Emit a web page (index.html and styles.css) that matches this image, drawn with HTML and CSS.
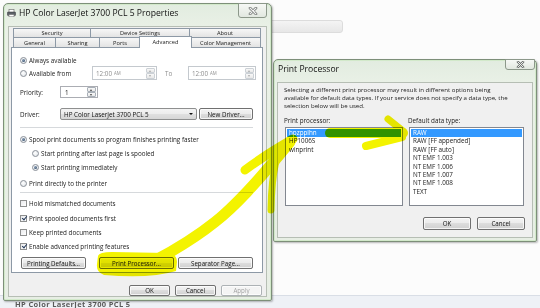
FILE: index.html
```html
<!DOCTYPE html>
<html lang="en">
<head>
<meta charset="utf-8">
<title>Print Processor</title>
<link rel="stylesheet" href="styles.css">
</head>
<body>
<div class="desktop">
  <div class="behind-field"></div>
  <div class="taskband"><span class="behind-caption">HP Color LaserJet 3700 PCL 5</span></div>

  <section class="window props">
    <header class="titlebar">
      <svg class="app-icon" viewBox="0 0 9 8" width="9" height="8">
        <rect x="2" y="0.5" width="5" height="3" fill="#fff" stroke="#777" stroke-width="0.7"/>
        <rect x="0.4" y="3" width="8.2" height="3.6" rx="0.8" fill="#5c6168" stroke="#333" stroke-width="0.5"/>
        <rect x="2" y="5.6" width="5" height="2.2" fill="#fff" stroke="#777" stroke-width="0.6"/>
      </svg>
      <span class="title">HP Color LaserJet 3700 PCL 5 Properties</span>
      <span class="close close-main">
        <svg viewBox="0 0 10 8" width="10" height="8"><path d="M2 1 L8 7 M8 1 L2 7" stroke="#6f7370" stroke-width="2.6" stroke-linecap="round"/><path d="M2 1 L8 7 M8 1 L2 7" stroke="#f3f3f3" stroke-width="1.1" stroke-linecap="round"/></svg>
      </span>
    </header>
    <div class="client">
      <div class="tabstrip">
        <div class="tabrow row-back">
          <span class="tab">Security</span>
          <span class="tab">Device Settings</span>
          <span class="tab">About</span>
        </div>
        <div class="tabrow row-front">
          <span class="tab">General</span>
          <span class="tab">Sharing</span>
          <span class="tab">Ports</span>
          <span class="tab active">Advanced</span>
          <span class="tab">Color Management</span>
        </div>
      </div>

      <div class="panel">
        <div class="row r-always"><span class="radio on"></span>Always available</div>
        <div class="row r-from">
          <span class="lbl-from"><span class="radio"></span>Available from</span>
          <span class="timebox t1">12:00 <small>AM</small><span class="spin"><i class="up"></i><i class="down"></i></span></span>
          <span class="to">To</span>
          <span class="timebox t2">12:00 <small>AM</small><span class="spin"><i class="up"></i><i class="down"></i></span></span>
        </div>
        <div class="row r-priority">
          <span class="lbl">Priority:</span>
          <span class="numbox">1<span class="spin dark"><i class="up"></i><i class="down"></i></span></span>
        </div>
        <div class="row r-driver">
          <span class="lbl">Driver:</span>
          <span class="combo">HP Color LaserJet 3700 PCL 5<i class="caret"></i></span>
          <span class="btn b-newdrv">New Driver...</span>
        </div>
        <div class="sep s1"></div>
        <div class="row r-spool"><span class="radio on"></span>Spool print documents so program finishes printing faster</div>
        <div class="row r-sub"><span class="radio"></span>Start printing after last page is spooled</div>
        <div class="row r-sub"><span class="radio on"></span>Start printing immediately</div>
        <div class="row r-direct"><span class="radio"></span>Print directly to the printer</div>
        <div class="sep s2"></div>
        <div class="row r-hold"><span class="check"></span>Hold mismatched documents</div>
        <div class="row r-first"><span class="check on"></span>Print spooled documents first</div>
        <div class="row"><span class="check"></span>Keep printed documents</div>
        <div class="row"><span class="check on"></span>Enable advanced printing features</div>
        <div class="row btnrow">
          <span class="btn b-defaults">Printing Defaults...</span>
          <span class="btn b-proc">Print Processor...</span>
          <span class="btn b-sep">Separator Page...</span>
        </div>
      </div>

      <div class="footer">
        <span class="btn fbtn">OK</span>
        <span class="btn fbtn">Cancel</span>
        <span class="btn fbtn disabled">Apply</span>
      </div>
    </div>
  </section>

  <section class="window pp">
    <header class="titlebar">
      <span class="title">Print Processor</span>
      <span class="close close-pp">
        <svg viewBox="0 0 10 8" width="9" height="7"><path d="M2 1 L8 7 M8 1 L2 7" stroke="#6f7370" stroke-width="2.6" stroke-linecap="round"/><path d="M2 1 L8 7 M8 1 L2 7" stroke="#f3f3f3" stroke-width="1.1" stroke-linecap="round"/></svg>
      </span>
    </header>
    <div class="client pp-client">
      <p class="intro">Selecting a different print processor may result in different options being<br>available for default data types. If your service does not specify a data type, the<br>selection below will be used.</p>
      <div class="pp-grid pp-labels">
        <span>Print processor:</span>
        <span>Default data type:</span>
      </div>
      <div class="pp-grid pp-lists">
        <ul class="listbox">
          <li class="sel">hpzppihn</li>
          <li>HP1006S</li>
          <li>winprint</li>
        </ul>
        <ul class="listbox">
          <li class="sel">RAW</li>
          <li>RAW [FF appended]</li>
          <li>RAW [FF auto]</li>
          <li>NT EMF 1.003</li>
          <li>NT EMF 1.006</li>
          <li>NT EMF 1.007</li>
          <li>NT EMF 1.008</li>
          <li>TEXT</li>
        </ul>
      </div>
      <div class="pp-footer">
        <span class="btn ppbtn">OK</span>
        <span class="btn ppbtn">Cancel</span>
      </div>
    </div>
  </section>

  <svg class="marker" viewBox="0 0 540 308" width="540" height="308">
    <path class="blob" d="M98 256 Q99 252 112 252 L168 253 Q177 254 177 262 L176 271 Q150 279 104 275 Q96 272 97 264 Z"/>
    <path class="stroke" stroke-width="11" d="M152 262 C175 250 195 238 215 222 S 255 185 290 142"/>
    <path class="stroke" stroke-width="9" d="M245 170 Q265 155 293 139"/>
    <path class="stroke" stroke-width="7" d="M288 142 Q272 150 271 210"/>
    <path class="stroke" stroke-width="10" d="M330 133 L403 133"/>
    <path class="stroke" stroke-width="7" d="M388 119 L403 131"/>
    <path class="stroke" stroke-width="8" d="M366 146 L402 137"/>
  </svg>
</div>
</body>
</html>
```

FILE: styles.css
```css
* { box-sizing: border-box; }
html, body { margin: 0; padding: 0; }
body {
  width: 540px; height: 308px; overflow: hidden;
  background: #fcfcfc;
  font-family: "Open Sans", "Noto Sans", "DejaVu Sans", sans-serif;
  font-size: 6.3px; color: #1b1b1b;
}
.desktop { position: relative; width: 540px; height: 308px; overflow: hidden; background: #fcfcfc; }

/* things behind the dialogs */
.behind-field {
  position: absolute; left: 266px; top: 20px; width: 77px; height: 13px;
  border: 1px solid #dcdcdc; border-radius: 3px;
  background: linear-gradient(#f4f4f4, #e7e7e7);
}
.taskband {
  position: absolute; left: 0; top: 295px; width: 540px; height: 13px;
  border-top: 1px solid #d9dee6; background: #eef1f6;
}
.behind-caption {
  position: absolute; left: 15px; top: 5px; font-size: 7.5px; line-height: 7px;
  font-weight: bold; color: #5a5a5a; filter: blur(0.4px); white-space: nowrap;
  letter-spacing: 0.35px;
}

/* windows */
.window {
  position: absolute; display: flex; flex-direction: column;
  border: 1px solid #7d8f79; border-radius: 5px 5px 2px 2px;
  background: linear-gradient(#e2ece0, #eaf1e7 26px, #e7eee4);
  box-shadow: inset 0 0 0 1px #d2e9ca, 1px 1px 2px rgba(0,0,0,.28);
}
.props { left: 3px; top: 3px; width: 269px; height: 298px; padding: 0 4px 3px 4px; }
.pp { left: 273px; top: 59px; width: 264px; height: 183px; padding: 0 3px 3px 3px; }

.titlebar { flex: none; height: 22px; display: flex; align-items: center; padding-bottom: 4px; }
.app-icon { margin-left: -1px; margin-right: 3px; flex: none; }
.title { font-size: 8.6px; color: #111; white-space: nowrap; }
.pp .title { padding-left: 1px; }
.close {
  position: absolute; display: flex; align-items: center; justify-content: center;
  border: 1px solid #8c988a; border-radius: 0 0 3px 3px;
  background: linear-gradient(#f6f8f5, #e2e8e0);
}
.close-main { left: 234px; top: -1px; width: 29px; height: 15px; }
.close-pp { left: 231px; top: -1px; width: 30px; height: 11px; }

.client { flex: 1; display: flex; flex-direction: column; background: #f0f0f0; border: 1px solid #b6beb4; }
.props .client { padding: 1px 0 0 2px; }

/* tabs */
.tabstrip { margin-left: 2px; display: flex; flex-direction: column; }
.tabrow { display: grid; }
.row-back { grid-template-columns: 77px 99px 72px; height: 9px; }
.row-front { grid-template-columns: 42px 44px 41px 50px 71px; height: 10px; }
.tab {
  display: flex; align-items: center; justify-content: center;
  border: 1px solid #8d99a6; border-bottom: none; border-right: none;
  background: linear-gradient(#f7f7f7, #e3e3e3);
  font-size: 5.7px; line-height: 6px; color: #222; white-space: nowrap;
}
.row-back .tab { padding-bottom: 1px; }
.tab:last-child { border-right: 1px solid #8d99a6; }
.tab.active {
  position: relative; z-index: 1; margin: -1px -2px -1px -1px; padding-bottom: 1px;
  background: #fff; border-right: 1px solid #8d99a6;
}

/* advanced panel */
.panel {
  flex: none; width: 252px; height: 226px; background: #fff;
  border: 1px solid #8d99a6; padding: 7px 9px 3px 8px;
  display: flex; flex-direction: column;
}
.row { display: flex; align-items: center; height: 10px; margin-top: 4px; white-space: nowrap; flex: none; }
.r-always { margin-top: 0; }
.r-from { height: 14px; margin-top: 1px; }
.r-priority { height: 12px; margin-top: 6px; }
.r-driver { height: 12px; margin-top: 10px; }
.sep { flex: none; height: 1px; background: #d6d9dc; }
.s1 { margin-top: 7px; }
.s2 { margin-top: 4px; }
.r-spool { margin-top: 6px; }
.r-sub { padding-left: 12px; }
.r-direct { margin-top: 6px; }
.r-hold, .r-first { margin-top: 5px; }
.btnrow { height: 12px; margin-top: 6px; }

.radio {
  position: relative; flex: none; width: 7px; height: 7px; margin-right: 2px;
  border: 1px solid #8a9098; border-radius: 50%;
  background: radial-gradient(circle at 40% 40%, #fff, #dce1e6);
}
.radio.on::after {
  content: ""; position: absolute; left: 1px; top: 1px; width: 3px; height: 3px; border-radius: 50%;
  background: radial-gradient(circle at 35% 35%, #8fa3bb, #1f3a58);
}
.check {
  position: relative; flex: none; width: 7px; height: 7px; margin-right: 2px;
  border: 1px solid #8e8f8f; background: linear-gradient(135deg, #e9eaec, #fff);
}
.check.on::after {
  content: ""; position: absolute; left: 1.5px; top: -0.5px; width: 2px; height: 4px;
  border-right: 1.2px solid #24395a; border-bottom: 1.2px solid #24395a; transform: rotate(40deg);
}

.lbl-from { display: flex; align-items: center; width: 72px; flex: none; }
.lbl { width: 40px; flex: none; }
.timebox {
  display: flex; align-items: center; height: 14px; flex: none;
  border: 1px solid #c4c9ce; color: #8e8e8e; padding-left: 3px;
}
.timebox small { font-size: 4.4px; margin-left: 2px; }
.t1 { width: 65px; }
.t2 { width: 68px; }
.to { width: 31px; padding-left: 8px; color: #8e8e8e; flex: none; }
.spin { margin-left: auto; margin-right: 1px; width: 9px; display: flex; flex-direction: column; height: 11px; }
.spin i {
  flex: 1; position: relative; border: 1px solid #ccd1d6; border-radius: 1px;
  background: linear-gradient(#f8f8f8, #e8e8e8);
}
.spin i::after {
  content: ""; position: absolute; left: 2px; top: 1px;
  border-left: 1.5px solid transparent; border-right: 1.5px solid transparent;
}
.spin .up::after { border-bottom: 2px solid #a9a9a9; }
.spin .down::after { border-top: 2px solid #a9a9a9; }
.spin.dark i { border-color: #a9b0b8; }
.spin.dark .up::after { border-bottom-color: #444; }
.spin.dark .down::after { border-top-color: #444; }
.numbox {
  display: flex; align-items: center; width: 38px; height: 12px; flex: none;
  border: 1px solid #abadb3; padding-left: 4px; color: #111;
}
.numbox .spin { height: 10px; }
.combo {
  position: relative; display: flex; align-items: center; width: 137px; height: 12px; flex: none;
  border: 1px solid #8e8f8f; border-radius: 2px; padding-left: 3px;
  background: linear-gradient(#f4f4f4 0, #ececec 50%, #e0e0e0 50%, #d6d6d6 100%);
  color: #111;
}
.caret {
  position: absolute; right: 3px; top: 4px;
  border-left: 2px solid transparent; border-right: 2px solid transparent; border-top: 2.5px solid #111;
}

.btn {
  display: flex; align-items: center; justify-content: center; flex: none;
  height: 12px; border: 1px solid #707070; border-radius: 2px;
  background: linear-gradient(#f3f3f3 0, #ebebeb 50%, #dddddd 50%, #d0d0d0 100%);
  box-shadow: inset 0 0 0 1px rgba(255,255,255,.75);
  font-size: 6.2px; color: #141414; white-space: nowrap;
}
.b-newdrv { width: 54px; margin-left: 2px; }
.b-defaults { width: 65px; margin-left: 1px; }
.b-proc { width: 75px; margin-left: 13px; }
.b-sep { width: 75px; margin-left: 4px; }

.footer { display: flex; justify-content: flex-end; gap: 5px; margin-top: 12px; padding-right: 4px; }
.fbtn { width: 41px; height: 11px; }
.btn.disabled { color: #a3a3a3; border-color: #adb2b5; background: #f4f4f4; }

/* print processor dialog */
.pp-client { padding: 3px 7px 7px 6px; }
.intro { margin: 0; font-size: 6.1px; line-height: 8px; white-space: nowrap; color: #1b1b1b; }
.pp-grid { display: grid; grid-template-columns: 119px 116px; column-gap: 5px; }
.pp-labels { margin-top: 7px; height: 8px; line-height: 8px; }
.pp-lists { margin-top: 2px; height: 79px; }
.listbox {
  margin: 0 0 0 1px; padding: 1px 1px; list-style: none;
  background: #fff; border: 1px solid #828790;
}
.listbox li { height: 8.4px; line-height: 8.4px; padding-left: 2px; white-space: nowrap; }
.listbox li.sel { background: #3399ff; color: #fff; }
.pp-footer { display: flex; justify-content: flex-end; gap: 6px; margin-top: 11px; }
.ppbtn { width: 48px; height: 13px; }

/* highlighter annotation */
.marker { position: absolute; left: 0; top: 0; mix-blend-mode: multiply; pointer-events: none; z-index: 5; }
.marker .blob { fill: #f3f300; }
.marker .stroke { fill: none; stroke: #f3f300; stroke-linecap: round; stroke-linejoin: round; }
```
